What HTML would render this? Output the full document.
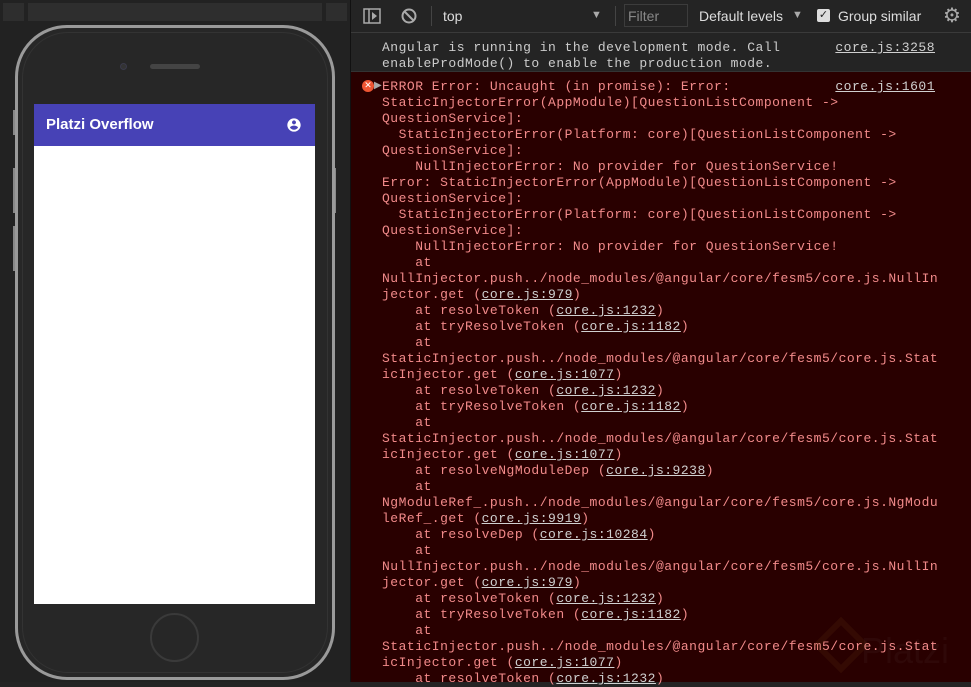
<!DOCTYPE html>
<html><head><meta charset="utf-8"><style>
*{margin:0;padding:0;box-sizing:border-box}
body{width:971px;height:682px;overflow:hidden;background:#242424;position:relative;font-family:"Liberation Sans",sans-serif}
#left{position:absolute;left:0;top:0;width:350px;height:682px;background:#222}
.topbar{position:absolute;top:3px;height:18px;background:#2e2e2e}
.phone{position:absolute;left:15px;top:25px;width:320px;height:655px;border:3px solid #9a9a9a;border-radius:52px;background:#272727}
.phone .inner{position:absolute;left:4px;top:4px;right:4px;bottom:4px;border:1px solid #333;border-radius:46px}
.side{position:absolute;width:4px;background:#888;left:13px}
.screen{position:absolute;left:34px;top:104px;width:281px;height:500px;background:#fff}
.appbar{height:42px;background:#4742b6;color:#fff;font-size:15px;font-weight:bold;padding:12px 0 0 12px;position:relative}
.home{position:absolute;left:150px;top:613px;width:49px;height:49px;border-radius:50%;border:2px solid #3a3a3a}
#dev{position:absolute;left:350px;top:0;width:621px;height:682px;background:#242424;border-left:1px solid #111}
.tb{height:33px;border-bottom:1px solid #3a3a3a;color:#ddd;font-size:14px;position:relative}
.tb span{position:absolute;top:8px}
.con{font-family:"Liberation Mono",monospace;font-size:13px;letter-spacing:0.5px;line-height:16px}
.info{color:#ccc;padding:7px 0 1px 31px;height:39px;position:relative;border-bottom:1px solid #333}
.err{background:#290000;color:#f28a8a;padding:7px 0 0 31px;height:610px;position:relative;white-space:pre}
.lk{text-decoration:underline;color:#d0d0d0}
.r{position:absolute;right:36px;text-decoration:underline;color:#d0d0d0}
</style></head><body>
<div id="left">
<div class="topbar" style="left:3px;width:21px"></div>
<div class="topbar" style="left:28px;width:294px"></div>
<div class="topbar" style="left:326px;width:21px"></div>
<div class="side" style="top:110px;height:25px"></div>
<div class="side" style="top:168px;height:45px"></div>
<div class="side" style="top:226px;height:45px"></div>
<div class="side" style="left:332px;top:168px;height:45px"></div>
<div class="phone"><div class="inner"></div></div>
<div style="position:absolute;left:120px;top:63px;width:7px;height:7px;border-radius:50%;background:#333;border:1px solid #3a3a4a"></div>
<div style="position:absolute;left:150px;top:64px;width:50px;height:5px;border-radius:3px;background:#444"></div>
<div class="screen"><div class="appbar">Platzi Overflow
<svg style="position:absolute;right:13px;top:13px" width="16" height="16" viewBox="0 0 24 24"><path fill="#fff" d="M12 2C6.480 2 2 6.48 2 12s4.48 10 10 10 10-4.48 10-10S17.52 2 12 2zm0 3c1.66 0 3 1.34 3 3s-1.34 3-3 3-3-1.340-3-3 1.34-3 3-3zm0 14.2c-2.5 0-4.71-1.28-6-3.22.03-1.99 4-3.08 6-3.08 1.99 0 5.97 1.09 6 3.08-1.29 1.94-3.5 3.22-6 3.22z"/></svg></div></div>
<div class="home"></div>
</div>
<div id="dev">
<div class="tb">
<svg style="position:absolute;left:12px;top:8px" width="18" height="16"><rect x="1" y="1" width="16" height="14" fill="none" stroke="#aaa" stroke-width="1.5"/><line x1="6" y1="1" x2="6" y2="15" stroke="#aaa" stroke-width="1.5"/><path d="M9 4l5 4-5 4z" fill="#aaa"/></svg>
<svg style="position:absolute;left:50px;top:8px" width="16" height="16"><circle cx="8" cy="8" r="6.5" fill="none" stroke="#aaa" stroke-width="2"/><line x1="3.5" y1="3.5" x2="12.5" y2="12.5" stroke="#aaa" stroke-width="2"/></svg>
<div style="position:absolute;left:80px;top:6px;width:1px;height:20px;background:#444"></div>
<span style="left:92px">top</span>
<span style="left:240px;font-size:11px;top:9px;color:#aaa">▼</span>
<div style="position:absolute;left:264px;top:6px;width:1px;height:20px;background:#444"></div>
<div style="position:absolute;left:273px;top:4px;width:64px;height:23px;border:1px solid #3c3c3c"></div>
<span style="left:277px;color:#888">Filter</span>
<span style="left:348px">Default levels</span>
<span style="left:441px;font-size:11px;top:9px;color:#aaa">▼</span>
<div style="position:absolute;left:466px;top:9px;width:13px;height:13px;background:#ddd;border-radius:2px;color:#222;font-size:11px;line-height:13px;text-align:center">✓</div>
<span style="left:487px">Group similar</span>
<span style="left:592px;font-size:20px;top:3px;color:#aaa">⚙</span>
</div>
<div class="con info">Angular is running in the development mode. Call<br>enableProdMode() to enable the production mode.<span class="r" style="top:7px">core.js:3258</span></div>
<div class="con err"><div style="position:absolute;left:11px;top:8px;width:12px;height:12px;border-radius:50%;background:#e53;color:#fff;font-size:9px;line-height:12px;text-align:center;letter-spacing:0">✕</div><div style="position:absolute;left:23px;top:7px;color:#aaa;font-size:10px;letter-spacing:0">▶</div><span class="r" style="top:7px">core.js:1601</span>ERROR Error: Uncaught (in promise): Error:
StaticInjectorError(AppModule)[QuestionListComponent -&gt;
QuestionService]:
  StaticInjectorError(Platform: core)[QuestionListComponent -&gt;
QuestionService]:
    NullInjectorError: No provider for QuestionService!
Error: StaticInjectorError(AppModule)[QuestionListComponent -&gt;
QuestionService]:
  StaticInjectorError(Platform: core)[QuestionListComponent -&gt;
QuestionService]:
    NullInjectorError: No provider for QuestionService!
    at
NullInjector.push../node_modules/@angular/core/fesm5/core.js.NullIn
jector.get (<span class="lk">core.js:979</span>)
    at resolveToken (<span class="lk">core.js:1232</span>)
    at tryResolveToken (<span class="lk">core.js:1182</span>)
    at
StaticInjector.push../node_modules/@angular/core/fesm5/core.js.Stat
icInjector.get (<span class="lk">core.js:1077</span>)
    at resolveToken (<span class="lk">core.js:1232</span>)
    at tryResolveToken (<span class="lk">core.js:1182</span>)
    at
StaticInjector.push../node_modules/@angular/core/fesm5/core.js.Stat
icInjector.get (<span class="lk">core.js:1077</span>)
    at resolveNgModuleDep (<span class="lk">core.js:9238</span>)
    at
NgModuleRef_.push../node_modules/@angular/core/fesm5/core.js.NgModu
leRef_.get (<span class="lk">core.js:9919</span>)
    at resolveDep (<span class="lk">core.js:10284</span>)
    at
NullInjector.push../node_modules/@angular/core/fesm5/core.js.NullIn
jector.get (<span class="lk">core.js:979</span>)
    at resolveToken (<span class="lk">core.js:1232</span>)
    at tryResolveToken (<span class="lk">core.js:1182</span>)
    at
StaticInjector.push../node_modules/@angular/core/fesm5/core.js.Stat
icInjector.get (<span class="lk">core.js:1077</span>)
    at resolveToken (<span class="lk">core.js:1232</span>)</div>
<div style="position:absolute;left:470px;top:625px;width:40px;height:40px;border:6px solid rgba(120,70,20,0.15);transform:rotate(45deg)"></div>
<div style="position:absolute;left:510px;top:630px;font-size:36px;color:rgba(255,255,255,0.03);font-family:'Liberation Sans',sans-serif">Platzi</div>
</div>
</body></html>
